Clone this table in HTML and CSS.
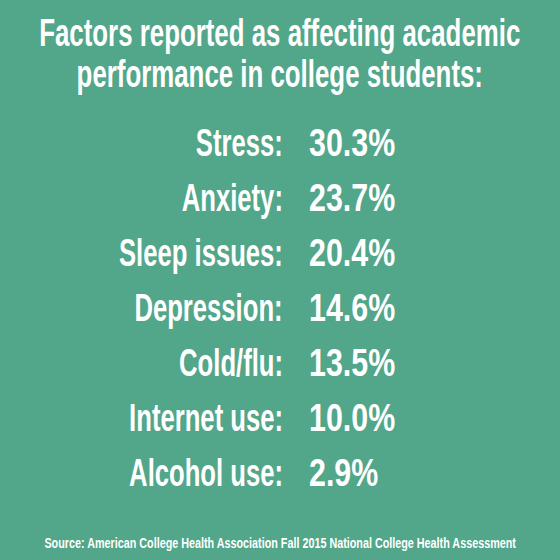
FILE: index.html
```html
<!DOCTYPE html>
<html lang="en">

<head>
    <meta charset="UTF-8">
    <meta name="viewport" content="width=device-width, initial-scale=1.0">
    <title>Academic Performance Factors</title>
    <link rel="stylesheet" href="styles.css">
</head>

<body>
    <main class="card">
        <h1 class="title">
            <span class="title-line">Factors reported as affecting academic</span>
            <span class="title-line">performance in college students:</span>
        </h1>

        <div class="stats">
            <span class="label">Stress:</span><span class="value">30.3%</span>
            <span class="label">Anxiety:</span><span class="value">23.7%</span>
            <span class="label">Sleep issues:</span><span class="value">20.4%</span>
            <span class="label">Depression:</span><span class="value">14.6%</span>
            <span class="label">Cold/flu:</span><span class="value">13.5%</span>
            <span class="label">Internet use:</span><span class="value">10.0%</span>
            <span class="label">Alcohol use:</span><span class="value">2.9%</span>
        </div>

        <p class="source"><span class="source-text">Source: American College Health Association Fall 2015 National College Health Assessment</span></p>
    </main>
</body>

</html>
```

FILE: styles.css
```css
* {
    box-sizing: border-box;
}

body {
    margin: 0;
    padding: 0;
    background-color: #52a68a;
}

.card {
    width: 560px;
    height: 560px;
    padding-top: 13px;
    display: flex;
    flex-direction: column;
    background-color: #52a68a;
    color: #fff;
    font-family: "Liberation Sans", Arial, sans-serif;
    font-weight: bold;
    overflow: hidden;
}

/* title */
.title {
    margin: 0;
    display: flex;
    flex-direction: column;
    align-items: center;
    font-size: 38px;
    line-height: 41px;
    font-weight: bold;
}

.title-line {
    white-space: nowrap;
    transform: scaleX(0.68);
    transform-origin: center;
}

/* list of factors */
.stats {
    margin-top: 21px;
    display: grid;
    grid-template-columns: 283px auto;
    column-gap: 26px;
    grid-auto-rows: 55px;
    font-size: 38px;
    line-height: 55px;
}

.stats .label {
    justify-self: end;
    white-space: nowrap;
    transform: scaleX(0.675);
    transform-origin: right center;
}

.stats .value {
    justify-self: start;
    white-space: nowrap;
    transform: scaleX(0.8);
    transform-origin: left center;
}

/* source */
.source {
    margin: 34px 0 0;
    display: flex;
    justify-content: center;
    font-size: 14px;
    line-height: 16px;
}

.source-text {
    white-space: nowrap;
    transform: scaleX(0.77);
    transform-origin: center;
}
```
